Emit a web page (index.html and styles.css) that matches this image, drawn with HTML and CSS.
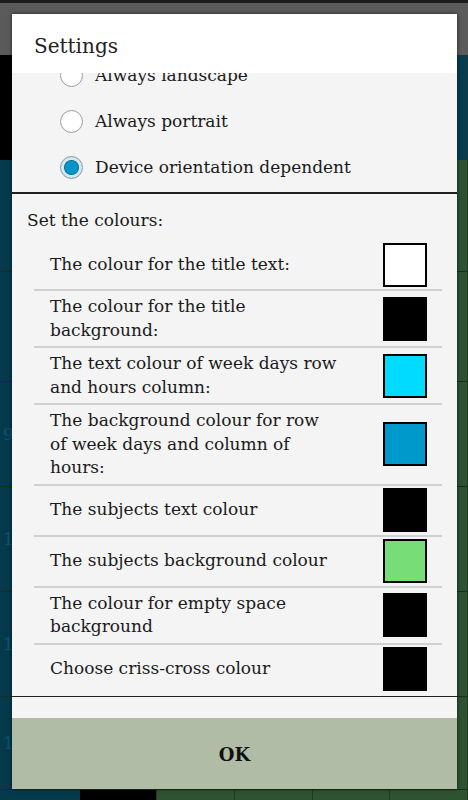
FILE: index.html
```html
<!DOCTYPE html>
<html lang="en">
<head>
  <meta charset="UTF-8">
  <title>Settings</title>
  <meta name="viewport" content="width=device-width, initial-scale=1.0">
  <link rel="stylesheet" href="styles.css">
</head>
<body>

  <!-- dimmed timetable behind the dialog -->
  <div class="app">
    <div class="statusbar"></div>
    <div class="toolbar"></div>
    <div class="timetable">
      <div class="tt-row tt-head">
        <div class="cell corner"></div>
        <div class="cell day"></div><div class="cell day"></div><div class="cell day"></div><div class="cell day"></div><div class="cell day"></div>
      </div>
      <div class="tt-row r1">
        <div class="cell hour"></div>
        <div class="cell subj"></div><div class="cell subj"></div><div class="cell subj"></div><div class="cell subj"></div><div class="cell subj"></div>
      </div>
      <div class="tt-row r2">
        <div class="cell hour"></div>
        <div class="cell subj"></div><div class="cell subj"></div><div class="cell subj"></div><div class="cell subj"></div><div class="cell subj"></div>
      </div>
      <div class="tt-row">
        <div class="cell hour">9</div>
        <div class="cell subj"></div><div class="cell subj"></div><div class="cell subj"></div><div class="cell subj"></div><div class="cell subj"></div>
      </div>
      <div class="tt-row">
        <div class="cell hour">10</div>
        <div class="cell subj"></div><div class="cell subj"></div><div class="cell subj"></div><div class="cell subj"></div><div class="cell subj"></div>
      </div>
      <div class="tt-row">
        <div class="cell hour">11</div>
        <div class="cell subj"></div><div class="cell subj"></div><div class="cell subj"></div><div class="cell subj"></div><div class="cell subj"></div>
      </div>
      <div class="tt-row r6">
        <div class="cell hour">12</div>
        <div class="cell subj"></div><div class="cell subj"></div><div class="cell subj"></div><div class="cell subj"></div><div class="cell subj"></div>
      </div>
      <div class="tt-row">
        <div class="cell hour"></div>
        <div class="cell empty"></div><div class="cell subj"></div><div class="cell subj"></div><div class="cell subj"></div><div class="cell subj"></div>
      </div>
    </div>
  </div>

  <!-- Settings dialog -->
  <div class="dialog">
    <div class="dialog-title">Settings</div>

    <div class="orientation">
      <div class="radio-list">
        <label class="radio"><span class="dot"></span>Always landscape</label>
        <label class="radio"><span class="dot"></span>Always portrait</label>
        <label class="radio"><span class="dot checked"></span>Device orientation dependent</label>
      </div>
    </div>

    <div class="colours">
      <div class="colours-head">Set the colours:</div>
      <div class="colour-list">
        <div class="colour-row">
          <span class="colour-label">The colour for the title text:</span>
          <span class="swatch sw-white"></span>
        </div>
        <div class="colour-row">
          <span class="colour-label">The colour for the title<br>background:</span>
          <span class="swatch sw-black"></span>
        </div>
        <div class="colour-row">
          <span class="colour-label">The text colour of week days row<br>and hours column:</span>
          <span class="swatch sw-cyan"></span>
        </div>
        <div class="colour-row">
          <span class="colour-label">The background colour for row<br>of week days and column of<br>hours:</span>
          <span class="swatch sw-blue"></span>
        </div>
        <div class="colour-row">
          <span class="colour-label">The subjects text colour</span>
          <span class="swatch sw-black"></span>
        </div>
        <div class="colour-row">
          <span class="colour-label">The subjects background colour</span>
          <span class="swatch sw-green"></span>
        </div>
        <div class="colour-row">
          <span class="colour-label">The colour for empty space<br>background</span>
          <span class="swatch sw-black"></span>
        </div>
        <div class="colour-row">
          <span class="colour-label">Choose criss-cross colour</span>
          <span class="swatch sw-black"></span>
        </div>
      </div>
    </div>

    <div class="dialog-gap"></div>
    <button class="ok-btn">OK</button>
  </div>

</body>
</html>
```

FILE: styles.css
```css
body {
  margin: 0;
  width: 468px;
  height: 800px;
  overflow: hidden;
  font-family: 'DejaVu Serif', 'Liberation Serif', serif;
  background-color: #2d5331;
}

/* background app (dimmed) */
.app {
  display: flex;
  flex-direction: column;
  height: 800px;
  overflow: hidden;
}

.statusbar {
  height: 3px;
  flex-shrink: 0;
  background-color: #1c1c1c;
}

.toolbar {
  height: 52px;
  flex-shrink: 0;
  background-color: #5b5b5b;
}

.timetable {
  flex: 1;
  min-height: 0;
  display: flex;
  flex-direction: column;
}

.tt-row {
  display: flex;
  flex-shrink: 0;
  height: 104px;
  border-bottom: 1px solid #1a2e1c;
}

.tt-head { height: 105px; border-bottom: none; }
.tt-row.r1 { height: 111px; }
.tt-row.r2 { height: 109px; }
.tt-row.r6 { height: 92px; }

.cell {
  flex: 1;
  border-right: 1px solid #1e3a22;
}

.corner { background-color: #000; }
.day { background-color: #073c51; }
.hour {
  background-color: #053a4d;
  color: #0d5470;
  font-size: 17px;
  padding-left: 3px;
  display: flex;
  align-items: center;
  border-right: none;
}
.subj { background-color: #2d5331; }
.empty { background-color: #000; }

/* dialog */
.dialog {
  position: absolute;
  left: 12px;
  top: 14px;
  width: 445px;
  height: 775px;
  background-color: #f4f4f4;
  display: flex;
  flex-direction: column;
  box-shadow: 0 0 4px rgba(0, 0, 0, 0.6);
  color: #1a1a1a;
}

.dialog-title {
  height: 59px;
  flex-shrink: 0;
  background-color: #ffffff;
  padding-left: 22px;
  font-size: 20px;
  line-height: 65px;
  color: #222;
  position: relative;
  z-index: 1;
}

.orientation {
  height: 119px;
  flex-shrink: 0;
  overflow: hidden;
  border-bottom: 1px solid #222;
}

.radio-list {
  margin-top: -21px;
}

.radio {
  height: 46px;
  display: flex;
  align-items: center;
  padding-left: 48px;
  font-size: 17px;
}

.dot {
  width: 21px;
  height: 21px;
  border-radius: 50%;
  border: 1.5px solid #a0a0a0;
  background: radial-gradient(circle, #ffffff 55%, #ececec 100%);
  margin-right: 12px;
  flex-shrink: 0;
}

.dot.checked {
  border-color: #8a9ca4;
  background: radial-gradient(circle, #0097cf 0, #0a93c8 6px, #0b6f98 7px, #d3ebf4 8px, #c2dce6 100%);
}

.colours {
  border-top: 1px solid #222;
  height: 504px;
  flex-shrink: 0;
  border-bottom: 1px solid #222;
  box-sizing: border-box;
}

.colours-head {
  font-size: 17px;
  line-height: 23.5px;
  padding: 15px 0 0 15px;
  height: 31px;
}

.colour-list {
  margin: 0 15px 0 22px;
}

.colour-row {
  display: flex;
  align-items: center;
  padding: 2px 15px 2px 16px;
  border-top: 2px solid #d0d0d0;
}

.colour-row:first-child {
  border-top: none;
}

.colour-label {
  flex: 1;
  font-size: 17px;
  line-height: 23.5px;
  padding: 2px 10px 2px 0;
}

.swatch {
  width: 40px;
  height: 40px;
  margin: 0.5px 0;
  border: 2px solid #000;
  flex-shrink: 0;
}

.sw-white { background-color: #ffffff; }
.sw-black { background-color: #000000; }
.sw-cyan { background-color: #00dbff; }
.sw-blue { background-color: #0099cc; }
.sw-green { background-color: #77dd77; }

.dialog-gap {
  height: 21px;
  flex-shrink: 0;
}

.ok-btn {
  flex: 1;
  border: none;
  background-color: #b0bca5;
  font-family: 'DejaVu Serif', 'Liberation Serif', serif;
  font-size: 18px;
  font-weight: bold;
  color: #111;
  padding: 0;
  padding-top: 2px;
}
```
